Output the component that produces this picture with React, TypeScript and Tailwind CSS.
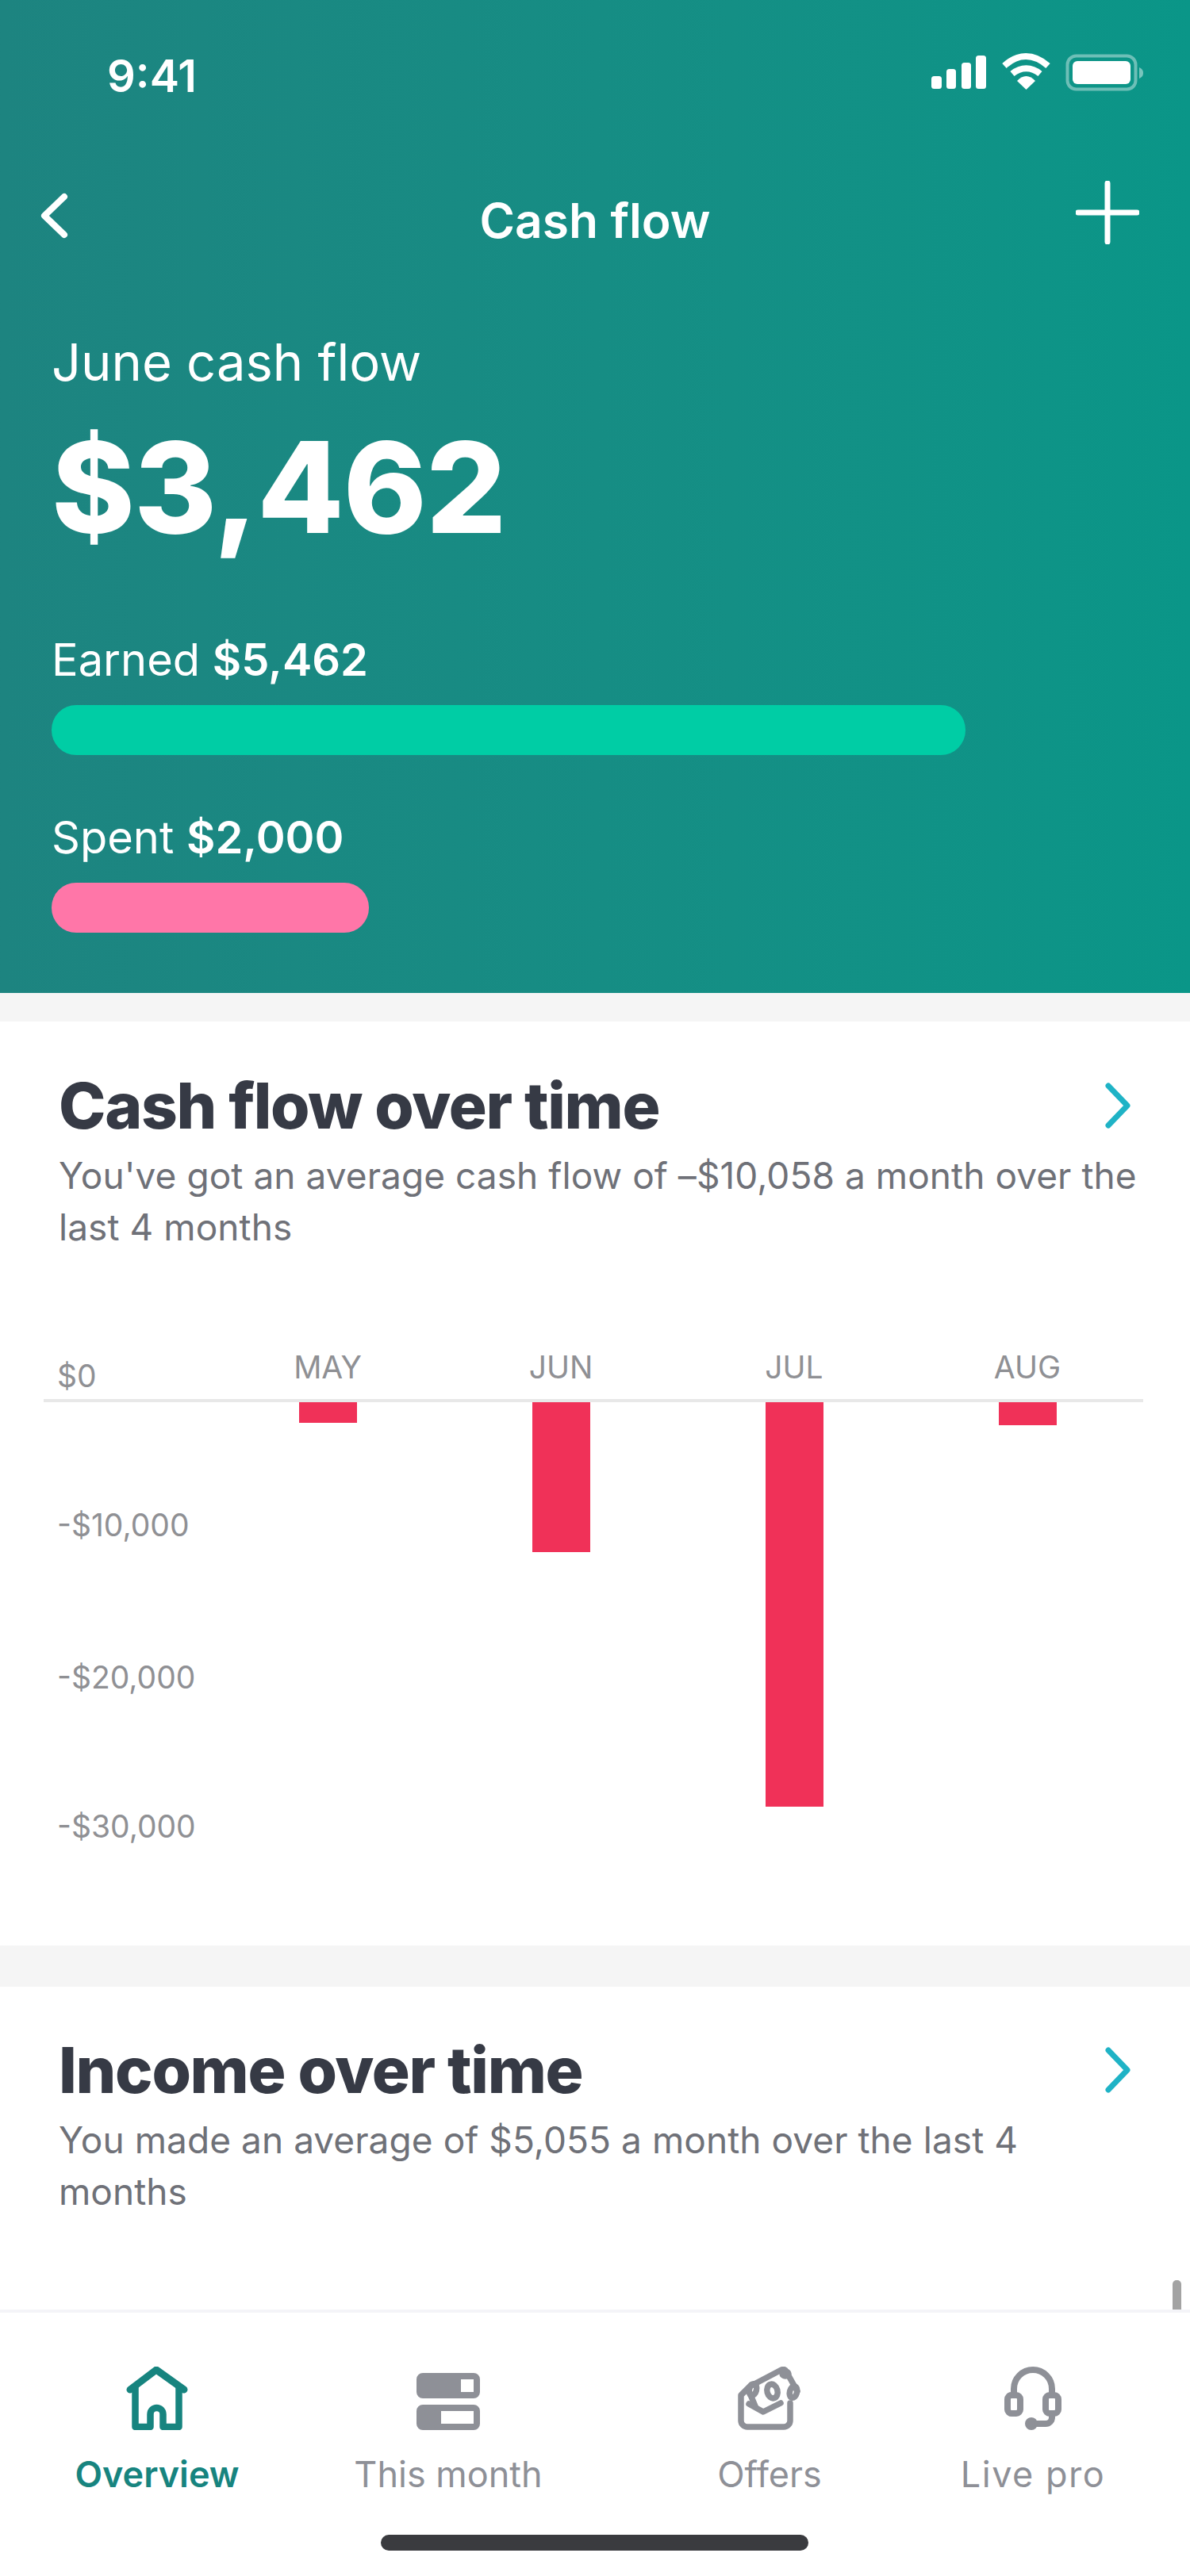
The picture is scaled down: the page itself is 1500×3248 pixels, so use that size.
const F = "font-['Inter',sans-serif]";

function StatusIcons() {
  return (
    <svg width="272" height="50" viewBox="0 0 272 50" fill="none" className="absolute left-[1172px] top-[67px]">
      <rect x="2" y="29" width="13" height="16" rx="3.5" fill="#fff" />
      <rect x="21" y="20" width="12" height="25" rx="3.5" fill="#fff" />
      <rect x="40" y="12" width="12" height="33" rx="3.5" fill="#fff" />
      <rect x="58" y="3" width="13" height="42" rx="3.5" fill="#fff" />
      <path d="M94 16 C111 0 131 0 149 16" stroke="#fff" strokeWidth="8" />
      <path d="M104 26 C115 17 128 17 139 26" stroke="#fff" strokeWidth="8" />
      <path d="M110 35 C117 27 126 27 133 35 L121.5 46 Z" fill="#fff" />
      <rect x="173.5" y="3.5" width="86" height="42" rx="11" stroke="#fff" strokeOpacity="0.4" strokeWidth="4" />
      <rect x="180" y="10" width="73" height="29" rx="6" fill="#fff" />
      <path d="M264 18 C268 20 269 22 269 25 C269 28 268 30 264 32 Z" fill="#fff" fillOpacity="0.45" />
    </svg>
  );
}

function Chevron({ color, width = 7 }: { color: string; width?: number }) {
  return (
    <svg width="36" height="58" viewBox="0 0 36 58" fill="none">
      <path d="M6 4 L30 29 L6 54" stroke={color} strokeWidth={width} strokeLinecap="round" strokeLinejoin="round" />
    </svg>
  );
}

function Bar({ h }: { h: string }) {
  return <div className={`mx-auto w-[73px] bg-[#f03158] ${h}`} />;
}

function Card({ title, lines }: { title: string; lines: string[] }) {
  return (
    <div className="relative pl-[74px]">
      <h2 className="text-[80px] leading-[84px] font-extrabold text-[#363a45] tracking-[-1.3px] whitespace-nowrap">{title}</h2>
      <p className="mt-[14px] text-[46px] leading-[65px] tracking-[0.06px] text-[#6f7178]">
        {lines.map((l) => (
          <span key={l} className="block whitespace-nowrap">{l}</span>
        ))}
      </p>
      <div className="absolute right-[73px] top-[13px]">
        <Chevron color="#1fb3c6" />
      </div>
    </div>
  );
}

function NavItem({ label, active, center, icon, wide }: { label: string; active?: boolean; center: string; icon: React.ReactNode; wide?: boolean }) {
  return (
    <div className={`absolute top-[68px] flex w-[300px] -translate-x-1/2 flex-col items-center ${center}`}>
      <div className="flex h-[80px] items-end justify-center">{icon}</div>
      <span className={`mt-[21px] text-[45px] leading-[70px] whitespace-nowrap ${active ? "font-semibold text-[#17847f]" : "text-[#8e9097]"} ${wide ? "tracking-[1.5px]" : ""}`}>{label}</span>
    </div>
  );
}

export default function App() {
  return (
    <div className={`${F} relative flex h-[3248px] w-[1500px] flex-col overflow-hidden bg-white`}>
      <header className="relative h-[1252px] shrink-0 bg-gradient-to-r from-[#1d8480] to-[#0a9688] text-white">
        <span className="absolute left-[135px] top-[60px] text-[56px] leading-[72px] font-semibold">9:41</span>
        <StatusIcons />
        <div className="absolute left-[50px] top-[243px]">
          <svg width="36" height="58" viewBox="0 0 36 58" fill="none">
            <path d="M31 5 L6 29 L31 53" stroke="#fff" strokeWidth="8" strokeLinecap="round" strokeLinejoin="round" />
          </svg>
        </div>
        <div className="pt-[236px] text-center text-[60.5px] leading-[84px] font-semibold">Cash flow</div>
        <div className="absolute left-[1356px] top-[228px]">
          <svg width="80" height="80" viewBox="0 0 80 80" fill="none">
            <path d="M40 3 V77 M3 40 H77" stroke="#fff" strokeWidth="7" strokeLinecap="round" />
          </svg>
        </div>
        <div className="px-[65px]">
          <div className="mt-[95px] text-[65px] leading-[84px]">June cash flow</div>
          <div className="mt-[20px] text-[159px] leading-[190px] font-extrabold tracking-[-1px]">$3,462</div>
          <div className="mt-[87px] text-[56px] leading-[72px]">Earned <span className="font-semibold">$5,462</span></div>
          <div className="mt-[21px] h-[63px] w-[1152px] rounded-[31px] bg-[#00cda5]" />
          <div className="mt-[68px] text-[56px] leading-[72px]">Spent <span className="font-semibold">$2,000</span></div>
          <div className="mt-[21px] h-[63px] w-[400px] rounded-[31px] bg-[#ff76a8]" />
        </div>
      </header>

      <div className="h-[36px] shrink-0 bg-[#f5f5f5]" />

      <section className="h-[1165px] shrink-0 bg-white pt-[64px]">
        <Card title="Cash flow over time" lines={["You've got an average cash flow of –$10,058 a month over the", "last 4 months"]} />
        <div className="ml-[55px] mr-[59px] mt-[119px]">
          <div className="grid grid-cols-[205px_294px_294px_294px_294px] items-end border-b-[4px] border-[#e8e8e8] pb-[15px] text-[39px] leading-[50px] text-[#8f9094]">
            <span className="pl-[17px] text-[39px] leading-[52px] -mb-[12px]">$0</span>
            {["MAY", "JUN", "JUL", "AUG"].map((m) => (
              <span key={m} className="translate-x-[6px] text-center">{m}</span>
            ))}
          </div>
          <div className="grid grid-cols-[205px_294px_294px_294px_294px] items-start">
            <div className="pl-[17px] pt-[129px] text-[39px] leading-[52px] text-[#8f9094] whitespace-nowrap">
              <div>-$10,000</div>
              <div className="mt-[140px]">-$20,000</div>
              <div className="mt-[136px]">-$30,000</div>
            </div>
            <div className="translate-x-[6px]"><Bar h="h-[26px]" /></div>
            <div className="translate-x-[6px]"><Bar h="h-[189px]" /></div>
            <div className="translate-x-[6px]"><Bar h="h-[510px]" /></div>
            <div className="translate-x-[6px]"><Bar h="h-[29px]" /></div>
          </div>
        </div>
      </section>

      <div className="h-[52px] shrink-0 bg-[#f5f5f5]" />

      <section className="relative h-[407px] shrink-0 bg-white pt-[63px]">
        <Card title="Income over time" lines={["You made an average of $5,055 a month over the last 4", "months"]} />
        <div className="absolute left-[1478px] top-[370px] h-[37px] w-[11px] rounded-t-[5px] bg-[#a3a3a3]" />
      </section>

      <nav className="relative flex-1 border-t-[4px] border-[#f4f4f8] bg-white">
        <NavItem
          label="Overview"
          active
          center="left-[198px]"
          icon={
            <svg width="80" height="80" viewBox="0 0 80 80" fill="none" stroke="#17847f" strokeLinecap="round" strokeLinejoin="round">
              <path d="M6 29 L39 4 L74 29" strokeWidth="9" />
              <path d="M12.5 26 V76 H31.5 V60 A8 8 0 0 1 47.5 60 V76 H67.5 V26" strokeWidth="8.5" />
            </svg>
          }
        />
        <NavItem
          label="This month"
          center="left-[565px]"
          icon={
            <svg width="80" height="72" viewBox="0 0 80 72" fill="#8e9097">
              <path fillRule="evenodd" d="M8 0 H72 A8 8 0 0 1 80 8 V24 A8 8 0 0 1 72 32 H8 A8 8 0 0 1 0 24 V8 A8 8 0 0 1 8 0 Z M56 8 V24 H72 V8 Z" />
              <path fillRule="evenodd" d="M8 40 H72 A8 8 0 0 1 80 48 V64 A8 8 0 0 1 72 72 H8 A8 8 0 0 1 0 64 V48 A8 8 0 0 1 8 40 Z M31 48 V64 H72 V48 Z" />
            </svg>
          }
        />
        <NavItem
          label="Offers"
          center="left-[970px]"
          icon={
            <svg width="80" height="80" viewBox="0 0 80 80" fill="none" stroke="#8e9097" strokeWidth="7.5" strokeLinecap="round" strokeLinejoin="round">
              <path d="M17 23 L4 36 V68 A8 8 0 0 0 12 76 H58 A8 8 0 0 0 66 68 V46" />
              <path d="M17 24 L55 4 C58 3 60 4 61 6 L75 31" />
              <path d="M15 33 L22 50" />
              <path d="M14 47 L32 57 L54 46" />
              <ellipse cx="43.5" cy="31" rx="6.5" ry="9" transform="rotate(-15 43.5 31)" />
              <ellipse cx="60" cy="9" rx="4" ry="3" />
              <ellipse cx="70" cy="32" rx="4.5" ry="7.5" transform="rotate(15 70 32)" />
              <ellipse cx="19" cy="29" rx="4.5" ry="7.5" transform="rotate(15 19 29)" />
            </svg>
          }
        />
        <NavItem
          label="Live pro"
          wide
          center="left-[1302px]"
          icon={
            <svg width="72" height="80" viewBox="0 0 72 80" fill="none" stroke="#8e9097" strokeWidth="8" strokeLinecap="round" strokeLinejoin="round">
              <path d="M12 34 V28 A24 24 0 0 1 60 28 V34" />
              <rect x="4" y="36" width="16" height="23" rx="5" />
              <rect x="52" y="36" width="16" height="23" rx="5" />
              <path d="M60 60 V64 A8 8 0 0 1 52 72 H36" />
              <circle cx="34" cy="72" r="6" fill="#8e9097" stroke="#8e9097" strokeWidth="4" />
            </svg>
          }
        />
        <div className="absolute left-[480px] top-[280px] h-[20px] w-[539px] rounded-full bg-[#3a3b3f]" />
      </nav>
    </div>
  );
}
